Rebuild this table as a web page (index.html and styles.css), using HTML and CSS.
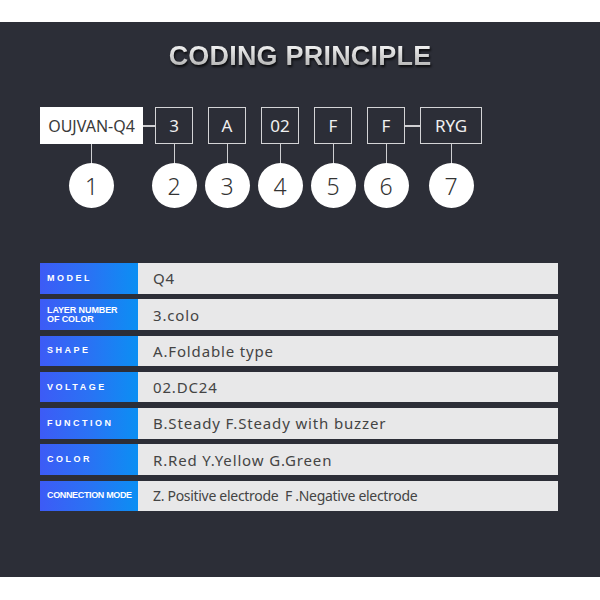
FILE: index.html
```html
<!DOCTYPE html>
<html>
<head>
<meta charset="utf-8">
<link rel="stylesheet" href="styles.css">
</head>
<body>
<div class="panel">
  <h1 class="title">CODING PRINCIPLE</h1>
  <div class="codes">
    <div class="col"><div class="box box-main">OUJVAN-Q4</div><div class="stem"></div><div class="circle">1</div></div>
    <div class="sep sep-first"><div class="link"></div></div>
    <div class="col"><div class="box">3</div><div class="stem"></div><div class="circle">2</div></div>
    <div class="sep"></div>
    <div class="col"><div class="box">A</div><div class="stem"></div><div class="circle">3</div></div>
    <div class="sep"></div>
    <div class="col"><div class="box">02</div><div class="stem"></div><div class="circle">4</div></div>
    <div class="sep"></div>
    <div class="col"><div class="box">F</div><div class="stem"></div><div class="circle">5</div></div>
    <div class="sep"></div>
    <div class="col"><div class="box">F</div><div class="stem"></div><div class="circle">6</div></div>
    <div class="sep"><div class="link"></div></div>
    <div class="col"><div class="box box-wide">RYG</div><div class="stem"></div><div class="circle">7</div></div>
  </div>
  <div class="table">
    <div class="row"><div class="label spaced">MODEL</div><div class="value">Q4</div></div>
    <div class="row"><div class="label twoline">LAYER NUMBER<br>OF COLOR</div><div class="value">3.colo</div></div>
    <div class="row"><div class="label spaced">SHAPE</div><div class="value">A.Foldable type</div></div>
    <div class="row"><div class="label spaced">VOLTAGE</div><div class="value">02.DC24</div></div>
    <div class="row"><div class="label spaced">FUNCTION</div><div class="value">B.Steady F.Steady with buzzer</div></div>
    <div class="row"><div class="label spaced">COLOR</div><div class="value">R.Red Y.Yellow G.Green</div></div>
    <div class="row"><div class="label tight">CONNECTION MODE</div><div class="value plain">Z. Positive electrode&nbsp;&nbsp;F .Negative electrode</div></div>
  </div>
</div>
</body>
</html>
```
FILE: styles.css
```css
html, body {
  margin: 0;
  padding: 0;
  background: #ffffff;
}
body {
  font-family: "Noto Sans", "Open Sans", sans-serif;
}
.panel {
  margin-top: 22px;
  height: 555px;
  background: #2c2e37;
  overflow: hidden;
}
.title {
  margin: 0;
  padding-top: 19px;
  height: 44px;
  text-align: center;
  font-family: "Liberation Sans", Arial, sans-serif;
  font-weight: bold;
  font-size: 27px;
  line-height: 30px;
  letter-spacing: 0.2px;
  color: #e6e6e6;
  background: linear-gradient(180deg, #f2f2f2 0%, #ffffff 30%, #d0d0d0 55%, #a9a9a9 78%, #e4e4e4 100%);
  -webkit-background-clip: text;
  background-clip: text;
  -webkit-text-fill-color: transparent;
  filter: drop-shadow(1px 2px 1px rgba(0, 0, 0, 0.75));
}
.codes {
  display: flex;
  align-items: flex-start;
  padding-left: 40px;
  padding-top: 22px;
}
.col {
  display: flex;
  flex-direction: column;
  align-items: center;
}
.box {
  box-sizing: border-box;
  width: 38px;
  height: 37px;
  border: 1.5px solid #d4d4d6;
  color: #f0f0f0;
  font-size: 17px;
  display: flex;
  align-items: center;
  justify-content: center;
}
.box-main {
  width: 103px;
  background: #ffffff;
  border-color: #ffffff;
  color: #3a3a3a;
  font-size: 16px;
}
.box-wide {
  width: 62px;
}
.stem {
  width: 1px;
  height: 19px;
  background: #cfcfd2;
}
.circle {
  width: 45px;
  height: 45px;
  margin: 0 -4px;
  border-radius: 50%;
  background: #ffffff;
  color: #333333;
  font-size: 23px;
  font-weight: 300;
  display: flex;
  align-items: center;
  justify-content: center;
}
.sep {
  width: 15px;
  flex-shrink: 0;
  padding-top: 18px;
}
.sep-first {
  width: 12px;
}
.link {
  height: 1.5px;
  background: #cfcfd2;
}
.table {
  margin: 55px 0 0 40px;
  width: 518px;
  display: flex;
  flex-direction: column;
  gap: 5.75px;
}
.row {
  display: flex;
  height: 30.5px;
}
.label {
  box-sizing: border-box;
  width: 98px;
  flex-shrink: 0;
  padding-left: 7px;
  display: flex;
  align-items: center;
  background: linear-gradient(90deg, #3d5bf6 0%, #2a72f4 50%, #0b8ff3 100%);
  color: #ffffff;
  font-family: "Liberation Sans", Arial, sans-serif;
  font-weight: bold;
  font-size: 9px;
  line-height: 1;
}
.spaced {
  letter-spacing: 2.5px;
}
.twoline {
  font-size: 9px;
  line-height: 8.5px;
  letter-spacing: -0.1px;
}
.tight {
  letter-spacing: -0.35px;
}
.value {
  flex: 1;
  background: #e8e8e9;
  color: #444444;
  font-size: 15px;
  letter-spacing: 0.85px;
  padding-left: 15px;
  display: flex;
  align-items: center;
}
.plain {
  font-size: 14px;
  letter-spacing: -0.3px;
}
```
